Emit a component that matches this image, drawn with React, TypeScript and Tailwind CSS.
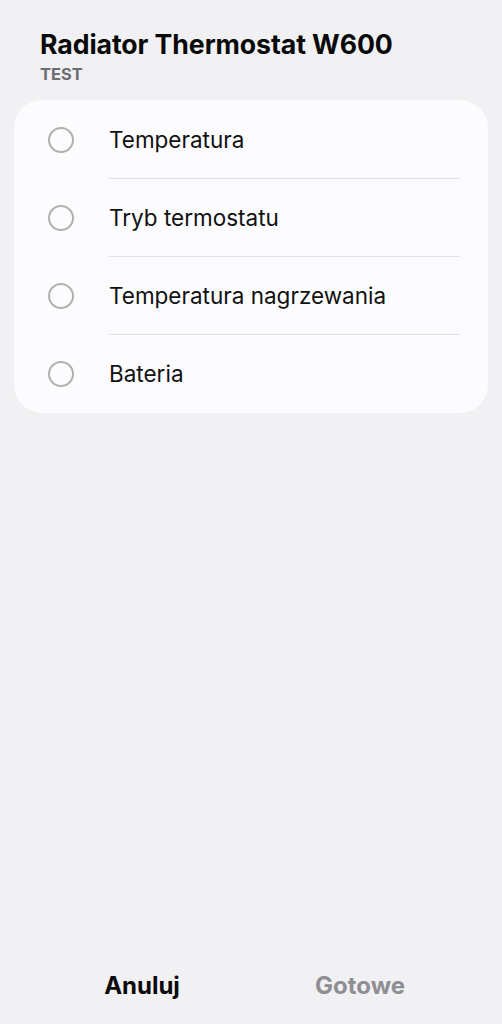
import React from "react";

const items = ["Temperatura", "Tryb termostatu", "Temperatura nagrzewania", "Bateria"];

export default function App() {
  return (
    <div
      className="flex h-[1024px] w-full flex-col bg-[#f1f1f3]"
      style={{ fontFamily: "Inter, Roboto, 'Noto Sans', sans-serif" }}
    >
      <div className="px-[40px] pt-[27px]">
        <h1 className="text-[26.7px] font-bold leading-[34px] tracking-[-0.1px] text-[#0a0a0a]">
          Radiator Thermostat W600
        </h1>
        <div className="mt-[3px] text-[16.5px] font-bold leading-[20px] text-[#6d6d72]">TEST</div>
      </div>
      <div className="mx-[14px] mt-[16px] rounded-[28px] bg-[#fcfcfe] py-[1px]">
        {items.map((label, i) => (
          <div key={label}>
            <div className="flex h-[77px] items-center">
              <div className="ml-[34px] h-[26px] w-[26px] rounded-full border-2 border-[#b0b0b0]" />
              <span className="ml-[35px] text-[22.5px] leading-[28px] text-[#111111]">{label}</span>
            </div>
            {i < items.length - 1 && <div className="ml-[95px] mr-[28px] h-px bg-[#e2e2e4]" />}
          </div>
        ))}
      </div>
      <div className="flex-1" />
      <div className="flex h-[76px] items-center px-[33px]">
        <button className="flex-1 text-center text-[24px] font-bold text-[#0a0a0a]">Anuluj</button>
        <button className="flex-1 text-center text-[24px] font-bold text-[#8f8f93]">Gotowe</button>
      </div>
    </div>
  );
}
